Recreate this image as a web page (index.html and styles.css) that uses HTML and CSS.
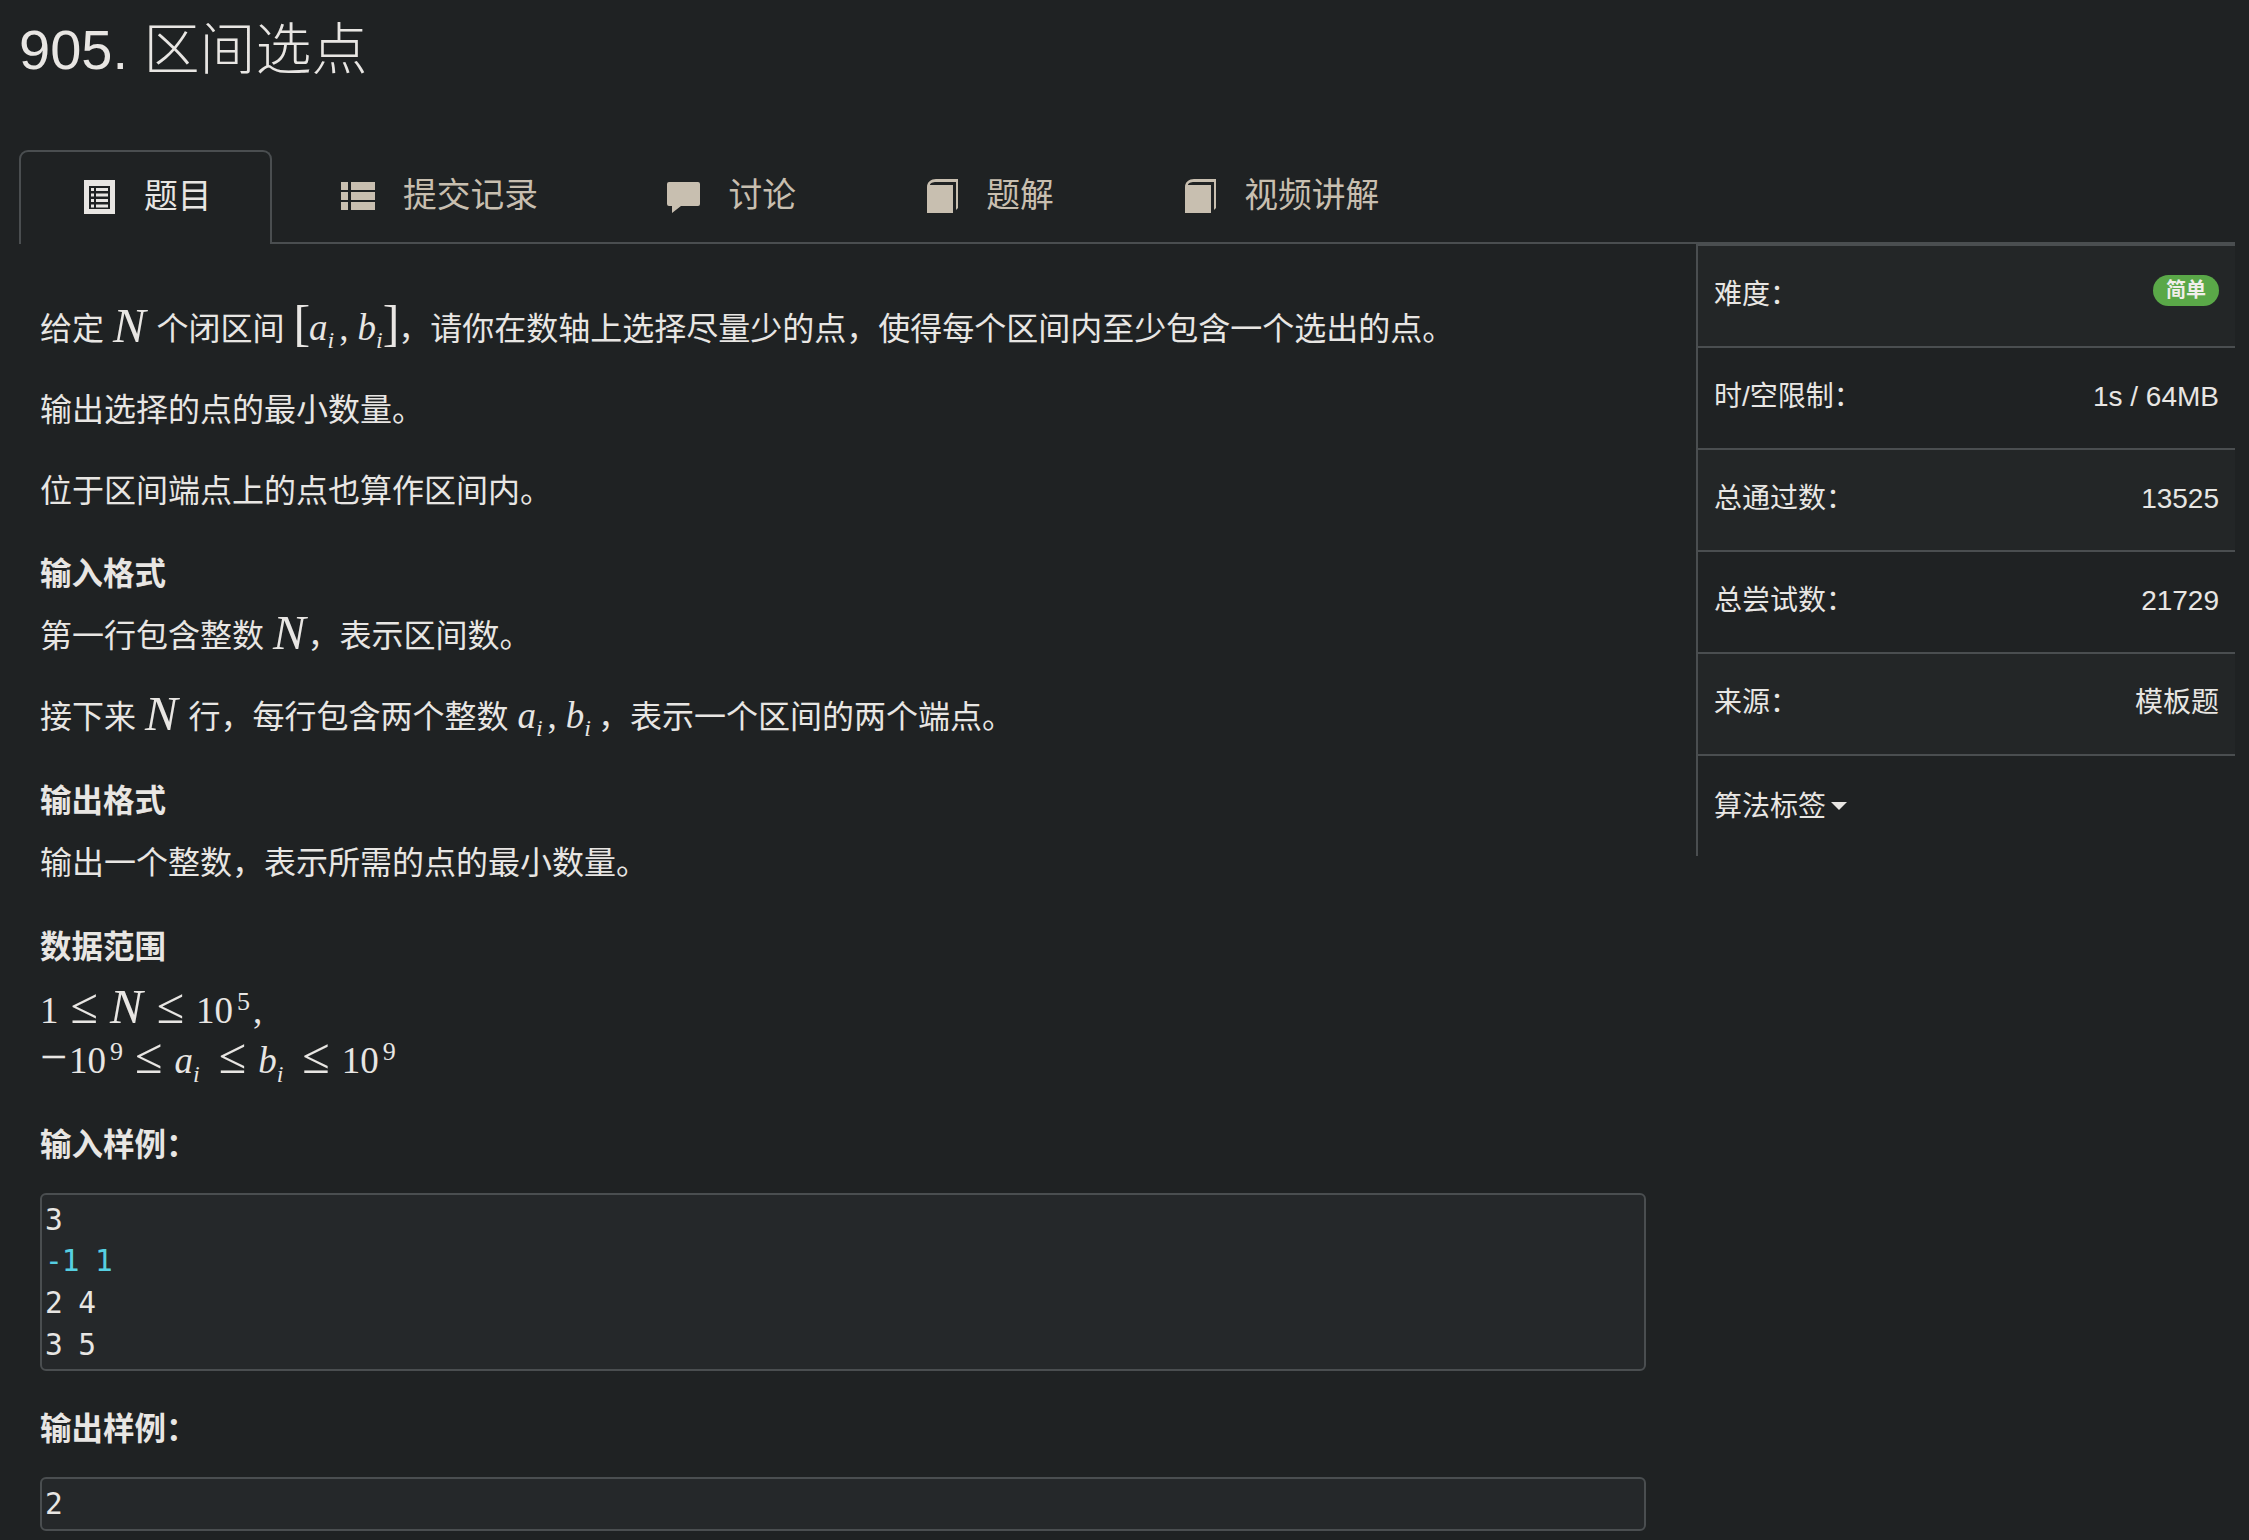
FILE: index.html
```html
<!DOCTYPE html>
<html lang="zh-CN">
<head>
<meta charset="utf-8">
<title>905. 区间选点</title>
<link rel="stylesheet" href="styles.css">
</head>
<body>
<div class="page">
  <h1 class="title">905. 区间选点</h1>
  <nav class="tabs">
    <a class="tab active">
      <svg class="icon" viewBox="0 0 34 34"><path fill="currentColor" fill-rule="evenodd" d="M0 0h31v34H0zM5 6v23h21V6z"/><path fill="currentColor" d="M7 8h3v3H7zM12 8h12v3H12zM7 13.500h3v3H7zM12 13.500h12v3H12zM7 19h3v3H7zM12 19h12v3H12zM7 24.500h3v3H7zM12 24.500h12v3H12z"/></svg>
      <span>题目</span>
    </a>
    <a class="tab">
      <svg class="icon" viewBox="0 0 34 34"><path fill="currentColor" d="M0 3h7v8H0zM10 3h24v8H10zM0 13h7v8H0zM10 13h24v8H10zM0 23h7v8H0zM10 23h24v8H10z"/></svg>
      <span>提交记录</span>
    </a>
    <a class="tab">
      <svg class="icon" viewBox="0 0 34 34"><path fill="currentColor" d="M3 3h29a2 2 0 0 1 2 2v20a2 2 0 0 1-2 2H15l-9 7v-7H3a2 2 0 0 1-2-2V5a2 2 0 0 1 2-2z"/></svg>
      <span>讨论</span>
    </a>
    <a class="tab">
      <svg class="icon book" viewBox="0 0 34 34"><path fill="currentColor" d="M9 0h22v29l-2 2V3H9C6 3 3 4 3 6h23v28H0V8C0 3 4 0 9 0z"/></svg>
      <span>题解</span>
    </a>
    <a class="tab">
      <svg class="icon book" viewBox="0 0 34 34"><path fill="currentColor" d="M9 0h22v29l-2 2V3H9C6 3 3 4 3 6h23v28H0V8C0 3 4 0 9 0z"/></svg>
      <span>视频讲解</span>
    </a>
  </nav>
  <div class="main">
    <article class="content">
      <p>给定 <span class="m n">N</span> 个闭区间 <span class="m"><span class="br">[</span>a<sub>i</sub><span class="cm">,</span>b<sub>i</sub><span class="br">]</span></span>，请你在数轴上选择尽量少的点，使得每个区间内至少包含一个选出的点。</p>
      <p>输出选择的点的最小数量。</p>
      <p>位于区间端点上的点也算作区间内。</p>
      <h4>输入格式</h4>
      <p>第一行包含整数 <span class="m n">N</span>，表示区间数。</p>
      <p>接下来 <span class="m n">N</span> 行，每行包含两个整数 <span class="m tail">a<sub>i</sub><span class="cm">,</span>b<sub>i</sub></span>，表示一个区间的两个端点。</p>
      <h4>输出格式</h4>
      <p>输出一个整数，表示所需的点的最小数量。</p>
      <h4>数据范围</h4>
      <div class="formula">
        <div class="fline"><span class="up">1</span><span class="op">≤</span><span class="m n">N</span><span class="op">≤</span><span class="up">10<sup>5</sup><span class="fcomma">,</span></span></div>
        <div class="fline"><span class="up"><span class="minus">−</span>10<sup>9</sup></span><span class="op">≤</span><span class="m">a<sub>i</sub></span><span class="op">≤</span><span class="m">b<sub>i</sub></span><span class="op">≤</span><span class="up">10<sup>9</sup></span></div>
      </div>
      <h4 class="sample">输入样例：</h4>
      <pre class="code">3
<span class="num">-1 1</span>
2 4
3 5</pre>
      <h4 class="sample">输出样例：</h4>
      <pre class="code">2</pre>
    </article>
    <aside class="panel">
      <div class="row"><span>难度：</span><span class="badge">简单</span></div>
      <div class="row"><span>时/空限制：</span><span>1s / 64MB</span></div>
      <div class="row"><span>总通过数：</span><span>13525</span></div>
      <div class="row"><span>总尝试数：</span><span>21729</span></div>
      <div class="row"><span>来源：</span><span>模板题</span></div>
      <div class="row"><span class="tags">算法标签<i class="caret"></i></span></div>
    </aside>
  </div>
</div>
</body>
</html>
```
FILE: styles.css
```css
* { box-sizing: border-box; }
html, body { margin: 0; padding: 0; height: 100%; background: #1f2223; }
body {
  color: #e8e6e3;
  font-family: "Liberation Sans", "Noto Sans CJK SC", sans-serif;
  font-size: 32px;
  line-height: 45px;
  overflow: hidden;
}
.page { padding: 0 14px 0 19px; }
.title {
  margin: 0;
  height: 150px;
  padding-top: 20px;
  font-size: 56px;
  line-height: 60px;
  font-weight: 300;
}
.tabs {
  display: flex;
  height: 94px;
  border-bottom: 2px solid #4a4e50;
}
.tab {
  display: flex;
  align-items: center;
  gap: 28px;
  height: 92px;
  padding: 0 62.2px 3px;
  font-size: 33.75px;
  color: #c8bfb0;
  border: 2px solid transparent;
  border-bottom: 0;
  border-radius: 9px 9px 0 0;
}
.tab.active {
  width: 253px;
  padding: 0 0 3px 63px;
  gap: 26px;
  margin-right: 4.8px;
  color: #e8e6e3;
  border-color: #4a4e50;
  background: #1f2223;
  height: 94px;
}
.icon { width: 34px; height: 34px; flex: none; }
.book { margin: 0 -3px 0 3px; }
.main { display: flex; align-items: flex-start; }
.content { flex: 1; min-width: 0; padding: 62.500px 50px 0 21px; }
.content p { margin: 0 0 36px; }
.content h4 { margin: 0 0 17.500px; font-size: 31.5px; line-height: 45px; font-weight: 700; padding-top: 2.400px; }
.m { font-family: "Liberation Serif", serif; font-style: italic; font-size: 37px; line-height: 0; }
.n { font-size: 49px; padding: 0 2px 0 0; line-height: 0; vertical-align: -2px; }
.tail { margin-right: 7px; }
.up { font-style: normal; font-family: "Liberation Serif", serif; }
.cm { font-style: normal; margin: 0 9px 0 5px; }
.br { font-style: normal; font-size: 50px; font-weight: 200; line-height: 0; margin-right: -1px; }
.m sub { font-size: 24px; line-height: 0; }
.up sup { font-size: 26px; line-height: 0; margin-left: 4px; }
.fcomma { margin-left: 3px; }
.minus { margin-right: 2px; font-size: 48px; line-height: 0; }
.formula { font-family: "Liberation Serif", serif; font-size: 37px; line-height: 50px; margin-bottom: 36.500px; margin-top: -1px; }
.fline { display: flex; align-items: baseline; gap: 12px; height: 50px; }
.fline sub { margin-right: 7px; }
.op { font-family: "Liberation Serif", serif; font-size: 50px; line-height: 0; }
.content h4.sample { margin-bottom: 25px; padding-top: 0; }
.code {
  margin: 0 0 36px;
  padding: 5px 3px 3px;
  border: 2px solid #4a4e50;
  border-radius: 6px;
  background: #25282a;
  font-family: "DejaVu Sans Mono", monospace;
  font-size: 29.5px;
  letter-spacing: -1.1px;
  line-height: 41.7px;
  color: #e8e6e3;
}
.num { color: #56cfe1; }
.panel { width: 539px; flex: none; border-left: 2px solid #4a4e50; font-size: 28px; line-height: 39px; }
.row {
  display: flex;
  justify-content: space-between;
  align-items: center;
  height: 102px;
  padding: 0 16px 3px 16px;
  border-top: 2px solid #4a4e50;
}
.row:nth-child(odd) { background: #232627; }
.row:last-child { background: none; height: 102px; padding-bottom: 0; }
.badge {
  background: #5aa848;
  color: #f0eeea;
  font-size: 20px;
  font-weight: 700;
  line-height: 31px;
  height: 31px;
  padding: 0 13px;
  border-radius: 16px;
  margin-top: -9px;
}
.tags { display: inline-flex; align-items: center; gap: 5px; }
.caret {
  width: 0; height: 0;
  border-left: 8px solid transparent;
  border-right: 8px solid transparent;
  border-top: 8px solid #e8e6e3;
}
```
